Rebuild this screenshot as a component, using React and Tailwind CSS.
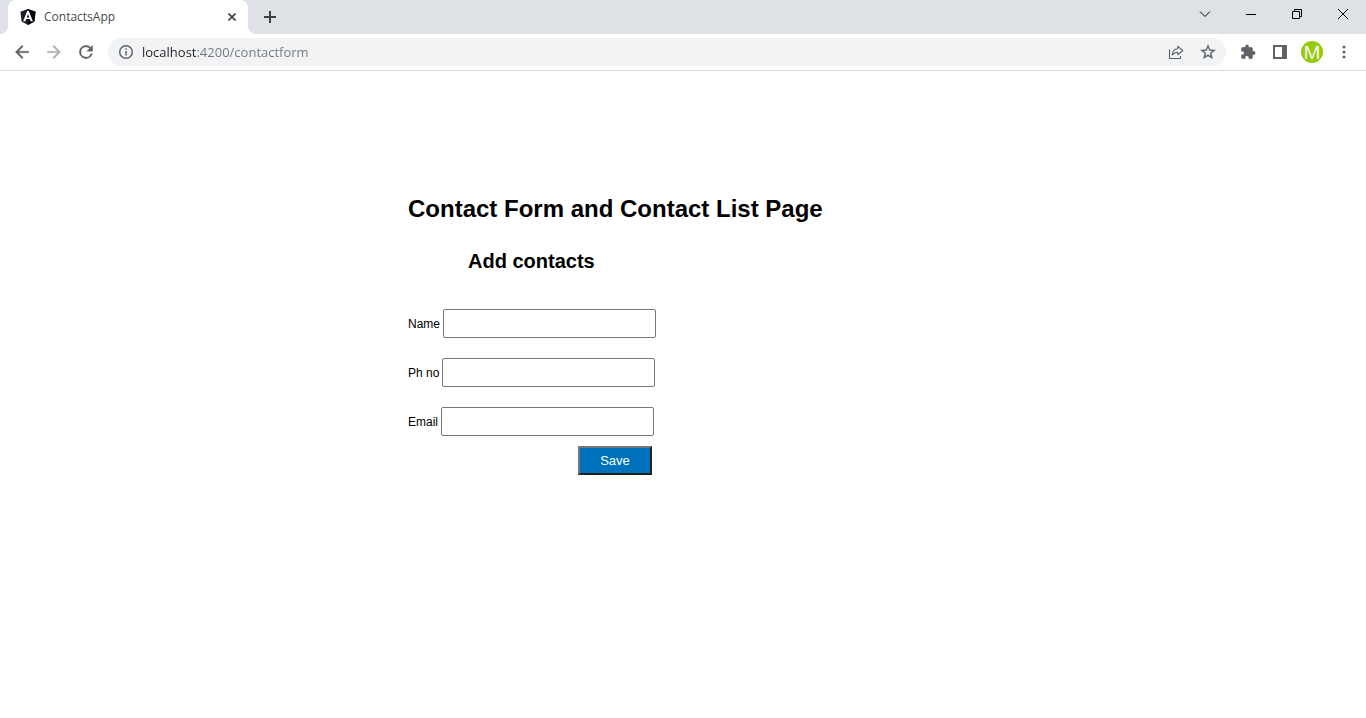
function AngularLogo() {
  return (
    <svg viewBox="0 0 16 16" className="size-4 shrink-0" aria-hidden="true">
      <path d="M8 0 .4 2.700l1.200 9.800L8 16l6.400-3.500 1.200-9.800z" fill="#1b1f29" />
      <path d="M8 0v16l6.400-3.500 1.200-9.800z" fill="#05070d" />
      <path fillRule="evenodd" d="M7.200 2 3.100 12.300h2.300l.8-2.300h3.600l.8 2.300h2.300L8.800 2zM8 5l1.200 3.400H6.800z" fill="#fff" />
    </svg>
  );
}

function TabCurve({ flip }) {
  return (
    <svg viewBox="0 0 8 8" className="size-2 shrink-0" aria-hidden="true">
      <path d={flip ? "M0 0v8h8A8 8 0 0 1 0 0z" : "M8 0v8H0A8 8 0 0 0 8 0z"} fill="#fff" />
    </svg>
  );
}

function Glyph({ d, className = "size-4" }) {
  return (
    <svg viewBox="0 0 24 24" className={className} fill="currentColor" stroke="currentColor" strokeWidth=".4" aria-hidden="true">
      <path d={d} />
    </svg>
  );
}

function IconButton({ label, className = "", children }) {
  return (
    <button type="button" aria-label={label} className={`flex h-7 w-8 shrink-0 items-center justify-center text-[#5f6368] ${className}`}>
      {children}
    </button>
  );
}

function WindowButton({ label, d }) {
  return (
    <button type="button" aria-label={label} className="flex h-7 w-[46px] items-center justify-center text-black">
      <svg viewBox="0 0 12 12" className="size-3" fill="none" stroke="currentColor" aria-hidden="true">
        <path d={d} />
      </svg>
    </button>
  );
}

function TabStrip() {
  return (
    <div className="flex h-[34px] bg-[#dee1e6]">
      <div className="flex items-end">
        <TabCurve />
        <div className="flex h-full w-60 items-center rounded-t-lg bg-white pr-2 pl-3">
          <AngularLogo />
          <span className="ml-2 flex-1 text-[12px] leading-4 text-[#45494d]">ContactsApp</span>
          <button type="button" aria-label="Close tab" className="flex size-4 items-center justify-center text-[#3c4043]">
            <svg viewBox="0 0 8 8" className="size-2" fill="none" stroke="currentColor" strokeWidth="1.600" aria-hidden="true">
              <path d="M.5.5l7 7M7.500.5l-7 7" />
            </svg>
          </button>
        </div>
        <TabCurve flip />
      </div>
      <button type="button" aria-label="New tab" className="flex h-full w-7 items-center justify-center text-[#3c4043]">
        <svg viewBox="0 0 12 12" className="size-3" fill="none" stroke="currentColor" strokeWidth="2" aria-hidden="true">
          <path d="M6 0v12M0 6h12" />
        </svg>
      </button>
      <div className="ml-auto flex">
        <WindowButton label="Search tabs" d="M1 3.500l5 5 5-5" />
        <WindowButton label="Minimize" d="M1 6.500h10" />
        <WindowButton label="Restore" d="M1.500 3.500h7v7h-7zM3.500 3.500v-2h7v7h-2" />
        <WindowButton label="Close window" d="M1 1l10 10M11 1L1 11" />
      </div>
    </div>
  );
}

function Toolbar() {
  return (
    <div className="flex h-[37px] items-center border-b border-[#dadce0] px-1.5">
      <div className="flex">
        <IconButton label="Back">
          <Glyph className="size-5" d="M20 11H7.830l5.590-5.590L12 4l-8 8 8 8 1.410-1.410L7.830 13H20v-2z" />
        </IconButton>
        <IconButton label="Forward" className="opacity-50">
          <Glyph className="size-5" d="M12 4l-1.410 1.410L16.170 11H4v2h12.170l-5.580 5.590L12 20l8-8z" />
        </IconButton>
        <IconButton label="Reload">
          <Glyph className="size-5" d="M17.650 6.350A7.958 7.958 0 0 0 12 4a8 8 0 1 0 7.730 10h-2.080A6 6 0 1 1 12 6c1.660 0 3.140.69 4.220 1.780L13 11h7V4l-2.350 2.350z" />
        </IconButton>
      </div>
      <div className="ml-1.5 flex h-7 flex-1 items-center rounded-full bg-[#f1f3f4] pr-0.5 pl-2.5">
        <svg viewBox="0 0 16 16" className="size-4 shrink-0 text-[#5f6368]" fill="none" stroke="currentColor" strokeWidth="1.500" aria-hidden="true">
          <circle cx="8" cy="8" r="6.300" />
          <path d="M8 7v4.500M8 4.300v1.500" />
        </svg>
        <input
          type="text"
          aria-label="Address"
          defaultValue="localhost:4200/contactform"
          className="ml-2 h-7 min-w-0 flex-1 bg-[linear-gradient(to_right,#202124_55px,#73777b_55px)] bg-clip-text text-[13px] text-transparent outline-none"
        />
        <IconButton label="Share this page">
          <svg viewBox="0 0 16 16" className="size-4" fill="none" stroke="currentColor" strokeWidth="1.100" strokeLinejoin="round" aria-hidden="true">
            <path d="M1.500 5.500v9h11v-2.500" />
            <path d="M9.800 2.300v2.500C6.500 5 4.600 7.300 4.200 11c1.500-2 3.100-2.800 5.600-2.800v2.600l5-4.300z" />
          </svg>
        </IconButton>
        <IconButton label="Bookmark this tab">
          <Glyph className="size-[18px]" d="M22 9.240l-7.190-.62L12 2 9.190 8.630 2 9.240l5.460 4.730L5.820 21 12 17.270 18.180 21l-1.630-7.030L22 9.240zM12 15.400l-3.760 2.270 1-4.280-3.320-2.880 4.380-.38L12 6.100l1.710 4.040 4.380.38-3.320 2.880 1 4.280L12 15.400z" />
        </IconButton>
      </div>
      <div className="ml-1.5 flex">
        <IconButton label="Extensions">
          <Glyph d="M20.500 11H19V7c0-1.100-.9-2-2-2h-4V3.500a2.500 2.500 0 0 0-5 0V5H4c-1.100 0-1.990.9-1.990 2v3.800H3.500c1.490 0 2.700 1.210 2.700 2.700s-1.210 2.700-2.700 2.700H2V20c0 1.100.9 2 2 2h3.800v-1.500c0-1.490 1.210-2.700 2.700-2.700s2.700 1.210 2.700 2.700V22H17c1.100 0 2-.9 2-2v-4h1.500a2.500 2.500 0 0 0 0-5z" />
        </IconButton>
        <IconButton label="Side panel">
          <svg viewBox="0 0 14 14" className="size-3.5" aria-hidden="true">
            <path fillRule="evenodd" d="M0 0h14v14H0zM2 2v10h7V2z" fill="currentColor" />
          </svg>
        </IconButton>
        <IconButton label="Profile">
          <span className="flex size-[22px] items-center justify-center rounded-full bg-[#95cb0d] text-[19px] leading-none text-white">M</span>
        </IconButton>
        <IconButton label="Menu">
          <svg viewBox="0 0 4 14" className="h-3.5 w-1" fill="currentColor" aria-hidden="true">
            <circle cx="2" cy="2" r="1.500" />
            <circle cx="2" cy="7" r="1.500" />
            <circle cx="2" cy="12" r="1.500" />
          </svg>
        </IconButton>
      </div>
    </div>
  );
}

function Field({ id, label, type }) {
  return (
    <div className="flex items-center gap-[3px]">
      <label htmlFor={id} className="text-[12px] leading-4">{label}</label>
      <input id={id} type={type} className="h-[29px] w-[213px] rounded-xs border border-[#767676] bg-white px-2 text-[13px]" />
    </div>
  );
}

export default function App() {
  return (
    <div className="min-h-screen bg-white font-['Open_Sans',sans-serif] text-black">
      <header>
        <TabStrip />
        <Toolbar />
      </header>
      <main className="pt-[122px] pl-[408px] font-['Liberation_Sans',Arial,sans-serif]">
        <h1 className="text-[24px] leading-8 font-bold">Contact Form and Contact List Page</h1>
        <form className="mt-5 w-[248px]">
          <h2 className="pl-[60px] text-[20px] leading-8 font-bold whitespace-nowrap">Add contacts</h2>
          <div className="mt-8 flex flex-col gap-5">
            <Field id="name" label="Name" type="text" />
            <Field id="phone" label="Ph no" type="tel" />
            <Field id="email" label="Email" type="email" />
          </div>
          <div className="mt-2.5 flex justify-end pr-1">
            <button type="button" className="h-[29px] w-[74px] border-2 border-t-[#767676] border-r-[#212121] border-b-[#212121] border-l-[#767676] bg-[#0072bb] text-[13px] leading-4 text-white">
              Save
            </button>
          </div>
        </form>
      </main>
    </div>
  );
}
